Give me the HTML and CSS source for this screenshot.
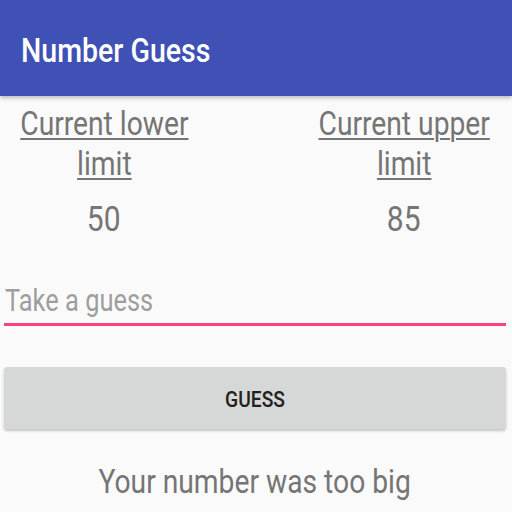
FILE: index.html
```html
<!DOCTYPE html>
<html>
<head>
<meta charset="utf-8">
<link rel="stylesheet" href="styles.css">
</head>
<body>
<header class="appbar"><h1 class="title"><span class="sq sq-left">Number Guess</span></h1></header>
<main class="content">
  <section class="limits">
    <div class="limit">
      <div class="label"><span class="sq">Current lower<br>limit</span></div>
      <div class="value"><span class="sq">50</span></div>
    </div>
    <div class="limit">
      <div class="label"><span class="sq">Current upper<br>limit</span></div>
      <div class="value"><span class="sq">85</span></div>
    </div>
  </section>
  <div class="field"><span class="hint sq sq-left">Take a guess</span></div>
  <button class="btn"><span class="sq">GUESS</span></button>
  <p class="result"><span class="sq">Your number was too big</span></p>
</main>
</body>
</html>
```
FILE: styles.css
```css
html, body { margin: 0; padding: 0; }
body {
  width: 512px;
  height: 512px;
  overflow: hidden;
  background: #fafafa;
  font-family: Roboto, "Noto Sans", sans-serif;
}
.sq {
  display: inline-block;
  transform: scaleX(0.855);
  transform-origin: center;
  white-space: nowrap;
}
.sq-left { transform-origin: left center; }
.appbar {
  height: 96px;
  box-sizing: border-box;
  padding: 5px 0 0 21px;
  background: #3f51b5;
  box-shadow: 0 2px 4px rgba(0,0,0,0.26);
  display: flex;
  align-items: center;
  position: relative;
}
.title {
  margin: 0;
  color: #fff;
  font-size: 33px;
  font-weight: 500;
  line-height: 39px;
}
.title .sq { transform: scaleX(0.865); }
.content {
  display: flex;
  flex-direction: column;
  padding: 0 6px 0 4px;
}
.limits {
  display: grid;
  grid-template-columns: 200px 200px;
  justify-content: space-between;
  padding: 8px 2px 0 0;
}
.limit {
  display: flex;
  flex-direction: column;
  align-items: center;
  text-align: center;
}
.label {
  color: #757575;
  font-size: 33px;
  line-height: 40px;
}
.label .sq {
  text-decoration: underline;
  text-decoration-thickness: 2px;
  text-underline-offset: 3px;
}
.value {
  color: #757575;
  font-size: 35px;
  line-height: 40px;
  margin-top: 16px;
}
.field {
  margin-top: 43px;
  border-bottom: 3px solid #ff4081;
  padding: 0 0 4px 1px;
  line-height: 36px;
  height: 36px;
}
.hint {
  color: #9e9e9e;
  font-size: 31px;
  line-height: 36px;
  transform: scaleX(0.82);
}
.btn {
  margin-top: 41px;
  height: 62px;
  border: none;
  border-radius: 3px;
  background: #d6d7d7;
  box-shadow: 0 2px 3px rgba(0,0,0,0.22);
  font-family: Roboto, "Noto Sans", sans-serif;
  font-weight: 500;
  font-size: 22.5px;
  color: #212121;
  padding: 2px 0 0 0;
}
.result {
  margin: 33px 0 0 0;
  text-align: center;
  color: #757575;
  font-size: 33px;
  line-height: 40px;
}
```
